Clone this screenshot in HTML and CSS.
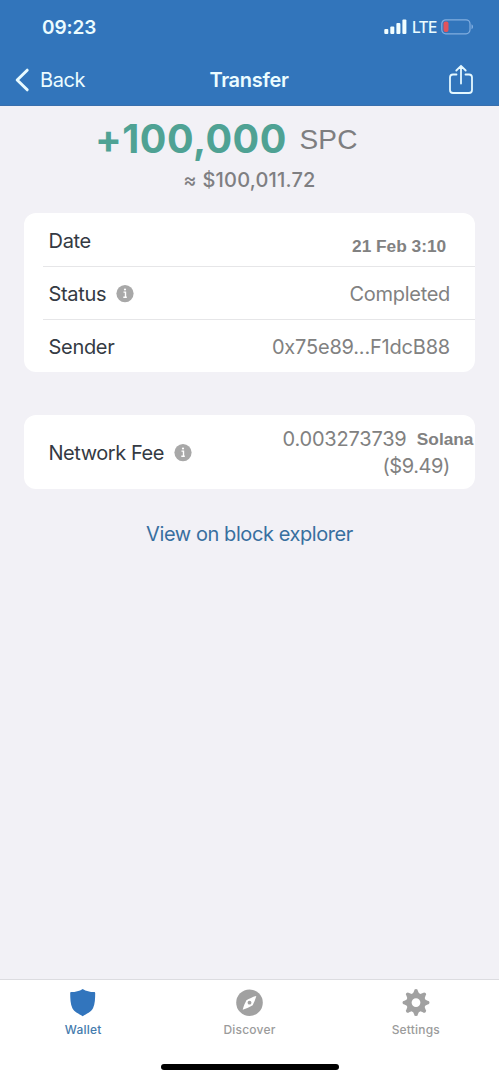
FILE: index.html
```html
<!DOCTYPE html>
<html lang="en">
<head>
<meta charset="utf-8">
<title>Transfer</title>
<link rel="stylesheet" href="styles.css">
</head>
<body>
<div class="app">
  <header class="header">
    <div class="status-bar">
      <span class="clock">09:23</span>
      <div class="indicators">
        <svg class="signal" width="23" height="16" viewBox="0 0 23 16" fill="#f1feff"><rect x="0.3" y="10" width="4" height="5" rx="1"/><rect x="6.3" y="7.5" width="4" height="7.5" rx="1"/><rect x="12.4" y="4" width="4" height="11" rx="1"/><rect x="18.4" y="0.5" width="4" height="14.5" rx="1"/></svg>
        <span class="network">LTE</span>
        <svg class="battery" width="33" height="16" viewBox="0 0 33 16"><rect x="0.8" y="0.8" width="28.2" height="14" rx="4" fill="none" stroke="#82aee0" stroke-width="1.2"/><rect x="2.5" y="2.6" width="5" height="10.5" rx="2" fill="#e2535b"/><path d="M30.5 5.3c2 .8 2 4.200 0 5z" fill="#82aee0"/></svg>
      </div>
    </div>
    <nav class="nav">
      <div class="back">
        <svg width="16" height="24" viewBox="0 0 16 24" fill="none" stroke="#e9fbff" stroke-width="3" stroke-linecap="round" stroke-linejoin="round"><path d="M13.200 2.200 3.200 12l10 9.800"/></svg>
        <span class="back-label">Back</span>
      </div>
      <h1 class="title">Transfer</h1>
      <svg class="share" width="26" height="32" viewBox="0 0 26 32" fill="none" stroke="#e4f8ff" stroke-width="1.8" stroke-linecap="round" stroke-linejoin="round"><path d="M8.500 10.500H5a3 3 0 0 0-3 3V26a3 3 0 0 0 3 3h16a3 3 0 0 0 3-3V13.500a3 3 0 0 0-3-3h-3.500M13 19.500V2M8.300 6.500 13 1.800l4.700 4.700"/></svg>
    </nav>
  </header>

  <main class="content">
    <div class="amount"><span class="value">+100,000</span><span class="symbol">SPC</span></div>
    <div class="fiat">≈ $100,011.72</div>

    <section class="card">
      <div class="row"><span class="label">Date</span><span class="detail date"><span class="wide">21 Feb 3:10</span></span></div>
      <div class="row divided"><span class="label status">Status</span><svg class="info" width="18" height="18" viewBox="0 0 18 18"><circle cx="9" cy="8.600" r="8.600" fill="#a8a8a8"/><path d="M7.500 7.100h2v5M7.300 12.300h3.500" fill="none" stroke="#fff" stroke-width="1.400"/><circle cx="9" cy="4.500" r="1.100" fill="#fff"/></svg><span class="detail completed">Completed</span></div>
      <div class="row divided"><span class="label sender">Sender</span><span class="detail address">0x75e89...F1dcB88</span></div>
    </section>

    <section class="card fee">
      <span class="label fee-label">Network Fee</span>
      <svg class="info" width="18" height="18" viewBox="0 0 18 18"><circle cx="9" cy="8.600" r="8.600" fill="#a8a8a8"/><path d="M7.500 7.100h2v5M7.300 12.300h3.500" fill="none" stroke="#fff" stroke-width="1.400"/><circle cx="9" cy="4.500" r="1.100" fill="#fff"/></svg>
      <div class="fee-values">
        <div class="fee-line"><span class="fee-number">0.003273739</span><span class="coin">Solana</span></div>
        <div class="fee-usd">($9.49)</div>
      </div>
    </section>

    <a class="explorer">View on block explorer</a>
  </main>

  <footer class="footer">
    <div class="tabs">
      <div class="tab active">
        <svg width="28" height="28" viewBox="0 0 28 28" fill="#3275bd"><path d="M13.700 0c3.300 2.300 7.400 3 11.300 3.100.8 0 1.200.5 1.200 1.200-.1 5.300-.1 10.500-2.200 15-1.800 3.700-6.500 5.500-10.300 8-3.800-2.500-8.500-4.300-10.300-8-2.100-4.500-2.100-9.700-2.200-15 0-.7.4-1.200 1.200-1.200C6.300 3 10.400 2.300 13.700 0z"/></svg>
        <span>Wallet</span>
      </div>
      <div class="tab">
        <svg width="28" height="28" viewBox="0 0 28 28"><circle cx="14.500" cy="13.700" r="13.300" fill="#a1a1a1"/><path d="M21.300 6.900c-1.200 4.200-2.200 6.300-3.600 9.400-3 1.800-6.300 3.500-10 4.400 1-3.900 2.300-6.400 3.700-9.400 3-1.800 6.200-3.400 9.900-4.400z" fill="#fff"/><circle cx="14.500" cy="13.700" r="1.900" fill="#a1a1a1"/></svg>
        <span>Discover</span>
      </div>
      <div class="tab">
        <svg width="28" height="28" viewBox="-14 -13.600 28 28" fill="#a1a1a1"><defs><path id="tooth" d="M-3.600-8-1.900-11.600a1.900 1.900 0 0 1 3.800 0L3.600-8z"/></defs><circle r="7.100" fill="none" stroke="#a1a1a1" stroke-width="5.400"/><use href="#tooth"/><use href="#tooth" transform="rotate(45)"/><use href="#tooth" transform="rotate(90)"/><use href="#tooth" transform="rotate(135)"/><use href="#tooth" transform="rotate(180)"/><use href="#tooth" transform="rotate(225)"/><use href="#tooth" transform="rotate(270)"/><use href="#tooth" transform="rotate(315)"/></svg>
        <span>Settings</span>
      </div>
    </div>
    <div class="home-indicator"></div>
  </footer>
</div>
</body>
</html>
```
FILE: styles.css
```css
* { box-sizing: border-box; }
body { margin: 0; font-family: Inter, "Liberation Sans", sans-serif; background: #f2f1f6; }
svg { display: block; flex: none; }
.app { width: 499px; height: 1080px; display: flex; flex-direction: column; overflow: hidden; }
.header { height: 106px; background: #3275bb; color: #ebfcff; display: flex; flex-direction: column; border-bottom: 1px solid #396fad; }
.status-bar { height: 53px; padding: 2px 24px 0 42px; display: flex; align-items: center; justify-content: space-between; }
.clock { font-size: 19px; font-weight: 600; letter-spacing: -0.1px; padding-top: 1px; }
.indicators { display: flex; align-items: center; }
.network { font-size: 15.5px; font-weight: 500; margin-left: 5px; width: 23px; letter-spacing: -0.7px; padding-top: 1px; }
.battery { margin: 0 1px 0 6px; }
.nav { height: 53px; padding: 2px 25px 0 14px; display: grid; grid-template-columns: 1fr auto 1fr; align-items: center; }
.back { display: flex; align-items: center; gap: 10px; }
.back-label { font-size: 20px; letter-spacing: -0.4px; }
.title { margin: 0 0 0 10px; font-size: 20px; font-weight: 600; letter-spacing: -0.3px; }
.share { justify-self: end; }
.content { flex: 1; padding: 0 24px; }
.amount { height: 60px; padding: 5px 0 0 71px; display: flex; align-items: center; white-space: nowrap; color: #4fa294; }
.value { font-size: 39.5px; font-weight: 700; line-height: 48px; letter-spacing: 0.5px; }
.symbol { font: 28px/32px "Liberation Sans", Arial, sans-serif; color: #7e7e80; margin-left: 12.5px; padding-top: 2px; letter-spacing: 0.2px; }
.fiat { height: 28px; line-height: 28px; font-size: 20px; font-weight: 500; letter-spacing: 0.2px; color: #7f7f82; text-align: center; }
.card { margin-top: 19px; background: #fff; border-radius: 12px; color: #343a43; font-size: 20px; }
.row { height: 53px; display: flex; align-items: center; padding: 2px 25px 0 5.5px; margin-left: 19px; }
.row.divided { border-top: 1px solid #e6e6e8; }
.label { font-size: 20px; letter-spacing: -0.3px; }
.info { margin-left: 10px; }
.detail { margin-left: auto; color: #818181; letter-spacing: -0.3px; }
.address { letter-spacing: -0.2px; }
.date { font: bold 16px/20px "Liberation Sans", Arial, sans-serif; letter-spacing: 0; padding: 12px 4px 0 0; }
.wide, .coin { display: inline-block; transform: scaleX(1.08); transform-origin: right; }
.fee { margin-top: 43px; height: 74px; padding: 2px 0 0 24.5px; display: flex; align-items: center; }
.fee-label { letter-spacing: -0.45px; }
.fee-values { margin-left: auto; color: #818181; line-height: 27px; text-align: right; letter-spacing: -0.2px; }
.fee-line { display: flex; align-items: center; }
.coin { font: bold 16px/20px "Liberation Sans", Arial, sans-serif; letter-spacing: 0; margin-left: 14px; margin-right: 2px; }
.fee-usd { padding-right: 25px; letter-spacing: -0.4px; }
.explorer { display: block; margin-top: 31px; text-align: center; color: #386f9f; font-size: 20px; line-height: 28px; letter-spacing: -0.42px; }
.footer { height: 101px; background: #fff; border-top: 1px solid #dcdce0; display: flex; flex-direction: column; align-items: center; }
.tabs { width: 100%; display: grid; grid-template-columns: repeat(3, 1fr); padding-top: 9px; }
.tab { display: flex; flex-direction: column; align-items: center; color: #9b9b9b; font-size: 12px; font-weight: 500; line-height: 16px; gap: 5px; letter-spacing: 0.2px; }
.active { color: #447bad; }
.home-indicator { width: 178px; height: 6px; margin-top: 26px; border-radius: 3px; background: #000; }
```
